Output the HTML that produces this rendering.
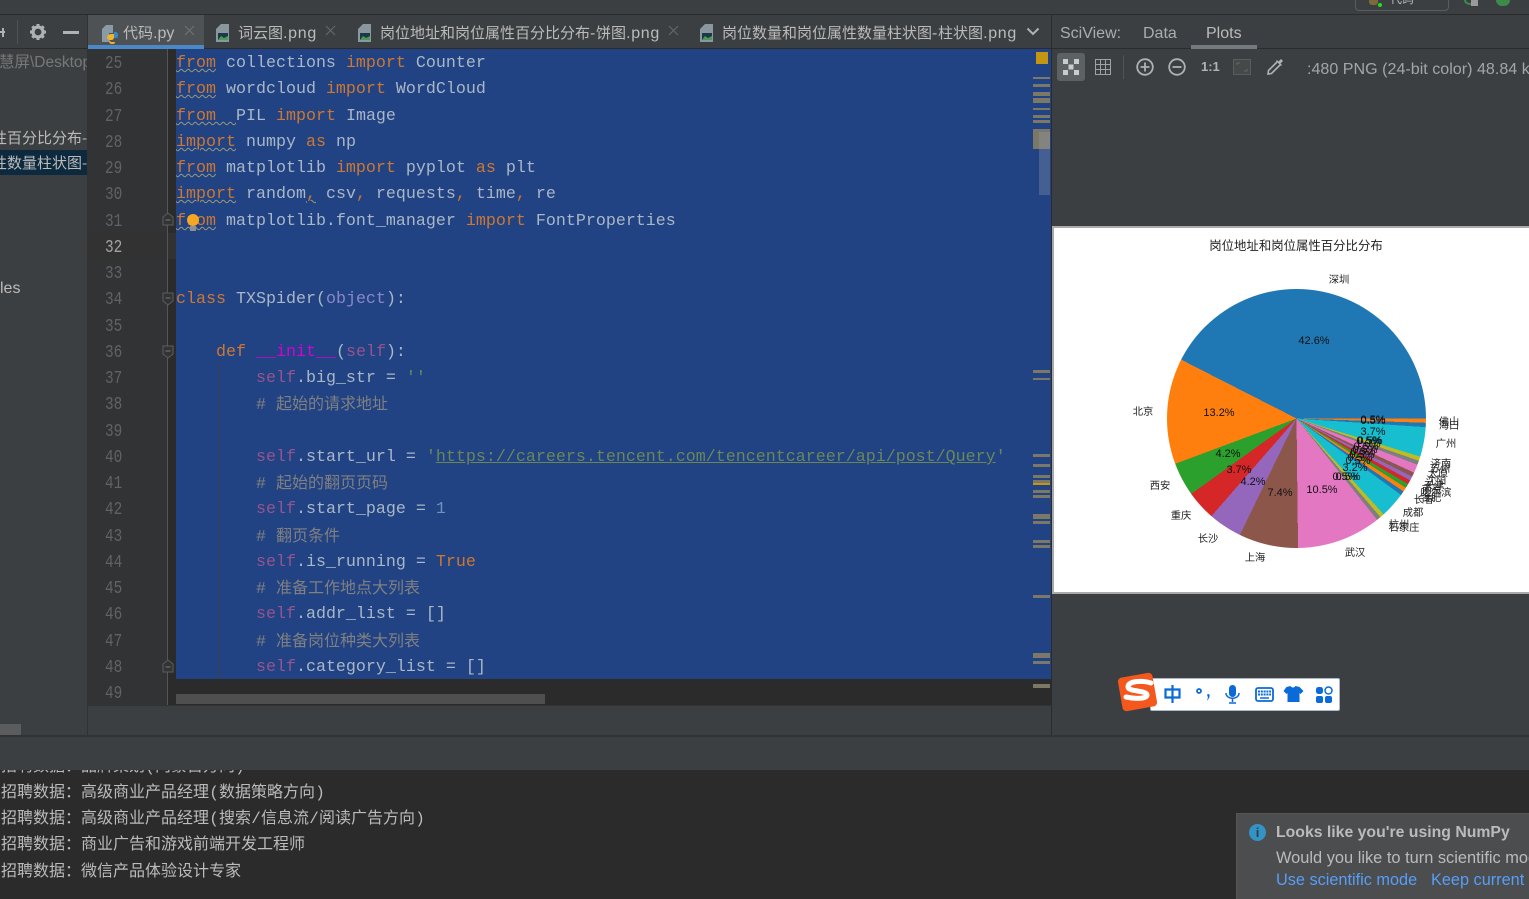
<!DOCTYPE html>
<html><head><meta charset="utf-8"><style>
html,body{margin:0;padding:0;background:#3c3f41}
#r{position:relative;width:1529px;height:899px;overflow:hidden;background:#3c3f41;font-family:"Liberation Sans","Noto Sans CJK SC",sans-serif}
#r div{position:absolute}
.l{left:176px;margin-top:2px;font:16.67px/26px "Liberation Mono","Noto Sans CJK SC",monospace;color:#a9b7c6;white-space:pre;height:26px}
.l b{font-weight:normal;font-size:16px}
.n{left:105px;margin-top:2px;font:18px/26px "Liberation Mono",monospace;color:#606366;transform:scaleX(.8);transform-origin:0 0}
.k{color:#cc7832}.s{color:#94558d}.t{color:#6a8759}.c{color:#808080}
.w{text-decoration:underline wavy #9a9a78 1px;text-underline-offset:1px}
.tab{top:16px;height:33px;font:15px/35px "Liberation Sans","Noto Sans CJK SC",sans-serif;color:#bbb;white-space:nowrap}
.tab i{font-style:normal;font-size:16px}
.sv{font-size:16px}
.m{left:1033px;width:17px;background:#7b7868}
.p{font:11px/12px "Liberation Sans","Noto Sans CJK SC",sans-serif;color:#111;transform:translate(-50%,-50%);white-space:nowrap;filter:blur(.25px)}
.z{font:10.3px/12px "Noto Sans CJK SC",sans-serif;color:#222;transform:translate(-50%,-50%);white-space:nowrap;filter:blur(.2px)}
.o{left:1px;font:16px/26px "WenQuanYi Zen Hei","Noto Sans CJK SC",sans-serif;color:#bbbbbb;white-space:nowrap}
.o b{font:16px/26px "Liberation Mono",monospace;display:inline-block;width:10px;text-align:center}
</style></head><body><div id="r">

<!-- top strip -->
<div style="left:0;top:14px;width:1529px;height:1px;background:#2b2b2b"></div>
<div style="left:1355px;top:-10px;width:92px;height:19px;border:1px solid #5a5d5f;border-radius:4px"></div>
<div style="left:1369px;top:0;width:9px;height:5px;background:#7a6a3c;border-radius:0 0 3px 3px"></div>
<div style="left:1378px;top:3px;width:4px;height:4px;background:#1fe01f;border-radius:50%"></div>
<div style="left:1390px;top:-8px;font:12px/14px 'Noto Sans CJK SC',sans-serif;color:#bbb">代码</div>
<div style="left:1464px;top:-5px;width:8px;height:8px;border:2px solid #3d8b4b;border-top:0;border-radius:50%"></div>
<div style="left:1471px;top:0;width:7px;height:6px;background:#9a9a9a"></div>
<div style="left:1496px;top:0;width:14px;height:6px;background:#3d8b4b;border-radius:0 0 6px 6px"></div>

<!-- left panel toolbar -->
<div style="left:0;top:31px;width:5px;height:2px;background:#afb1b3"></div>
<div style="left:2px;top:28px;width:2px;height:9px;background:#afb1b3"></div>
<div style="left:17px;top:20px;width:1px;height:24px;background:#505355"></div>
<svg style="position:absolute;left:29px;top:23px" width="18" height="18" viewBox="0 0 18 18"><circle cx="9" cy="9" r="5" fill="none" stroke="#afb1b3" stroke-width="3.2"/><g stroke="#afb1b3" stroke-width="3"><path d="M9 1v3M9 14v3M1 9h3M14 9h3M3.3 3.3l2.1 2.1M12.6 12.6l2.1 2.1M14.7 3.3l-2.1 2.1M5.4 12.6l-2.1 2.1"/></g></svg>
<div style="left:63px;top:31px;width:16px;height:3px;background:#afb1b3"></div>
<div style="left:0;top:48px;width:1529px;height:1px;background:#2b2b2b"></div>

<!-- left panel -->
<div style="left:0;top:50px;width:87px;height:24px;overflow:hidden;white-space:nowrap;font:15.5px/26px 'Liberation Sans','Noto Sans CJK SC',sans-serif;color:#787878"><span style="margin-left:-1px">慧屏\Desktop</span></div>
<div style="left:0;top:150px;width:87px;height:25px;background:#0d293e"></div>
<div style="left:0;top:126px;width:87px;height:24px;overflow:hidden;white-space:nowrap;font:15px/24px 'Noto Sans CJK SC',sans-serif;color:#bbb"><span style="margin-left:-8px">性百分比分布-</span></div>
<div style="left:0;top:151px;width:87px;height:24px;overflow:hidden;white-space:nowrap;font:15px/24px 'Noto Sans CJK SC',sans-serif;color:#bbb"><span style="margin-left:-8px">性数量柱状图-</span></div>
<div style="left:0;top:277px;font:16px/24px 'Liberation Sans',sans-serif;color:#bbb">les</div>
<div style="left:0;top:724px;width:21px;height:11px;background:#5a5c5e"></div>
<div style="left:87px;top:15px;width:1px;height:720px;background:#323232"></div>

<!-- tabs -->
<div style="left:88px;top:15px;width:116px;height:30px;background:#4e5254"></div>
<div style="left:88px;top:45px;width:116px;height:4px;background:#4a88c7"></div>
<svg style="position:absolute;left:101px;top:24px" width="18" height="20" viewBox="0 0 18 20"><path d="M1 5l4-4h7v8H8v9H1z" fill="#8a9aa6"/><path d="M9 10h4v-2c2 0 4 0 4 3s-1 3-3 3h-3v1H9z" fill="#3a86c8"/><path d="M6 14c0-3 2-4 4-4h3v3c0 2-1 3-3 3H8c0 2 0 4 3 4s3-1 3-2h-4" fill="#f0b429"/></svg>
<div class="tab" style="left:123px">代码<i>.py</i></div>
<svg style="position:absolute;left:184px;top:25px" width="12" height="12"><path d="M1 1l9 9M10 1l-9 9" stroke="#6c7072" stroke-width="1.2"/></svg>
<svg style="position:absolute;left:216px;top:24px" width="14" height="18" viewBox="0 0 14 18"><path d="M0 5l5-5h8v18H0z" fill="#8a979f"/><rect x="2" y="9" width="10" height="7" fill="#1c3a46"/><path d="M2 16l3-4 3 2 4-2v4z" fill="#4c9a5a"/></svg>
<div class="tab" style="left:238px">词云图<i style="letter-spacing:.7px">.png</i></div>
<svg style="position:absolute;left:325px;top:25px" width="12" height="12"><path d="M1 1l9 9M10 1l-9 9" stroke="#63676a" stroke-width="1.2"/></svg>
<svg style="position:absolute;left:358px;top:24px" width="14" height="18" viewBox="0 0 14 18"><path d="M0 5l5-5h8v18H0z" fill="#8a979f"/><rect x="2" y="9" width="10" height="7" fill="#1c3a46"/><path d="M2 16l3-4 3 2 4-2v4z" fill="#4c9a5a"/></svg>
<div class="tab" style="left:380px">岗位地址和岗位属性百分比分布<i style="letter-spacing:.7px">-</i>饼图<i style="letter-spacing:.7px">.png</i></div>
<svg style="position:absolute;left:668px;top:25px" width="12" height="12"><path d="M1 1l9 9M10 1l-9 9" stroke="#63676a" stroke-width="1.2"/></svg>
<svg style="position:absolute;left:700px;top:24px" width="14" height="18" viewBox="0 0 14 18"><path d="M0 5l5-5h8v18H0z" fill="#8a979f"/><rect x="2" y="9" width="10" height="7" fill="#1c3a46"/><path d="M2 16l3-4 3 2 4-2v4z" fill="#4c9a5a"/></svg>
<div class="tab" style="left:722px">岗位数量和岗位属性数量柱状图<i style="letter-spacing:.7px">-</i>柱状图<i style="letter-spacing:.7px">.png</i></div>
<svg style="position:absolute;left:1026px;top:27px" width="14" height="10"><path d="M1.5 1.5L7 7l5.5-5.5" fill="none" stroke="#afb1b3" stroke-width="2"/></svg>

<!-- gutter + editor -->
<div style="left:88px;top:49px;width:80px;height:656px;background:#313335"></div>
<div style="left:168px;top:49px;width:8px;height:656px;background:#2b2b2b"></div>
<div style="left:88px;top:233px;width:88px;height:26px;background:#323232"></div>
<div style="left:167px;top:49px;width:1px;height:656px;background:#555"></div>
<div style="left:176px;top:49px;width:875px;height:630px;background:#214283"></div>
<div style="left:176px;top:679px;width:875px;height:26px;background:#2b2b2b"></div>
<div style="left:176px;top:694px;width:369px;height:10px;background:#4f4f4f"></div>
<div style="left:88px;top:705px;width:963px;height:1px;background:#333"></div>
<div style="left:219px;top:364px;width:1px;height:315px;background:#3d3f48"></div>

<div class="n" style="top:49px">25</div><div class="n" style="top:75px">26</div><div class="n" style="top:102px">27</div><div class="n" style="top:128px">28</div><div class="n" style="top:154px">29</div><div class="n" style="top:180px">30</div><div class="n" style="top:207px">31</div><div class="n" style="top:233px;color:#a4a3a3">32</div><div class="n" style="top:259px">33</div><div class="n" style="top:285px">34</div><div class="n" style="top:312px">35</div><div class="n" style="top:338px">36</div><div class="n" style="top:364px">37</div><div class="n" style="top:390px">38</div><div class="n" style="top:417px">39</div><div class="n" style="top:443px">40</div><div class="n" style="top:469px">41</div><div class="n" style="top:495px">42</div><div class="n" style="top:522px">43</div><div class="n" style="top:548px">44</div><div class="n" style="top:574px">45</div><div class="n" style="top:600px">46</div><div class="n" style="top:627px">47</div><div class="n" style="top:653px">48</div><div class="n" style="top:679px">49</div>

<div class="l" style="top:49px"><span class="k w">from</span> collections <span class="k">import</span> Counter</div>
<div class="l" style="top:75px"><span class="k w">from</span> wordcloud <span class="k">import</span> WordCloud</div>
<div class="l" style="top:102px"><span class="k w">from  </span>PIL <span class="k">import</span> Image</div>
<div class="l" style="top:128px"><span class="k w">import</span> numpy <span class="k">as</span> np</div>
<div class="l" style="top:154px"><span class="k w">from</span> matplotlib <span class="k">import</span> pyplot <span class="k">as</span> plt</div>
<div class="l" style="top:180px"><span class="k w">import</span> random<span class="k w">,</span> csv<span class="k">,</span> requests<span class="k">,</span> time<span class="k">,</span> re</div>
<div class="l" style="top:207px"><span class="k w">from</span> matplotlib.font_manager <span class="k">import</span> FontProperties</div>
<div class="l" style="top:285px"><span class="k">class</span> TXSpider(<span style="color:#8888c6">object</span>):</div>
<div class="l" style="top:338px">    <span class="k">def</span> <span style="color:#d400d4">__init__</span>(<span class="s">self</span>):</div>
<div class="l" style="top:364px">        <span class="s">self</span>.big_str = <span class="t">''</span></div>
<div class="l" style="top:390px">        <span class="c"># <b>起始的请求地址</b></span></div>
<div class="l" style="top:443px">        <span class="s">self</span>.start_url = <span class="t">'<u>https://careers.tencent.com/tencentcareer/api/post/Query</u>'</span></div>
<div class="l" style="top:469px">        <span class="c"># <b>起始的翻页页码</b></span></div>
<div class="l" style="top:495px">        <span class="s">self</span>.start_page = <span style="color:#6897bb">1</span></div>
<div class="l" style="top:522px">        <span class="c"># <b>翻页条件</b></span></div>
<div class="l" style="top:548px">        <span class="s">self</span>.is_running = <span class="k">True</span></div>
<div class="l" style="top:574px">        <span class="c"># <b>准备工作地点大列表</b></span></div>
<div class="l" style="top:600px">        <span class="s">self</span>.addr_list = []</div>
<div class="l" style="top:627px">        <span class="c"># <b>准备岗位种类大列表</b></span></div>
<div class="l" style="top:653px">        <span class="s">self</span>.category_list = []</div>

<!-- fold markers -->
<svg style="position:absolute;left:162px;top:212px" width="13" height="14"><path d="M1 5l5-4 5 4v8H1z" fill="#313335" stroke="#5a5d5f"/><path d="M3.5 8h5" stroke="#777"/></svg>
<svg style="position:absolute;left:162px;top:292px" width="13" height="14"><path d="M1 1h10v8l-5 4-5-4z" fill="#313335" stroke="#5a5d5f"/><path d="M3.5 6h5" stroke="#777"/></svg>
<svg style="position:absolute;left:162px;top:345px" width="13" height="14"><path d="M1 1h10v8l-5 4-5-4z" fill="#313335" stroke="#5a5d5f"/><path d="M3.5 6h5" stroke="#777"/></svg>
<svg style="position:absolute;left:162px;top:659px" width="13" height="14"><path d="M1 5l5-4 5 4v8H1z" fill="#313335" stroke="#5a5d5f"/><path d="M3.5 8h5" stroke="#777"/></svg>

<!-- bulb -->
<div style="left:187px;top:214px;width:12px;height:12px;background:#f5a623;border-radius:50%"></div>
<div style="left:190px;top:226px;width:6px;height:5px;background:#8d8f96"></div>

<!-- minimap marks -->
<div style="left:1036px;top:52px;width:12px;height:12px;background:#c49513"></div>
<div class="m" style="top:77px;height:2px"></div><div class="m" style="top:84px;height:3px"></div><div class="m" style="top:92px;height:4px"></div><div class="m" style="top:98px;height:5px"></div><div class="m" style="top:108px;height:2px"></div><div class="m" style="top:115px;height:3px"></div><div class="m" style="top:120px;height:3px"></div><div class="m" style="top:129px;height:20px"></div>
<div style="left:1039px;top:132px;width:11px;height:63px;background:rgba(150,160,180,.32)"></div>
<div class="m" style="top:370px;height:3px"></div><div class="m" style="top:378px;height:2px"></div><div class="m" style="top:454px;height:3px"></div><div class="m" style="top:464px;height:3px"></div><div class="m" style="top:475px;height:3px"></div><div class="m" style="top:480px;height:3px"></div><div class="m" style="top:483px;height:2px;background:#c49513"></div><div class="m" style="top:490px;height:3px"></div><div class="m" style="top:495px;height:3px"></div><div class="m" style="top:514px;height:5px"></div><div class="m" style="top:521px;height:3px"></div><div class="m" style="top:540px;height:3px"></div><div class="m" style="top:545px;height:3px"></div><div class="m" style="top:595px;height:3px"></div><div class="m" style="top:653px;height:5px"></div><div class="m" style="top:661px;height:3px"></div><div class="m" style="top:684px;height:4px"></div>

<!-- SciView -->
<div style="left:1051px;top:15px;width:1px;height:720px;background:#2b2b2b"></div>
<div class="tab sv" style="left:1060px;color:#a9adb0">SciView:</div>
<div class="tab sv" style="left:1143px;color:#a9adb0">Data</div>
<div class="tab sv" style="left:1206px">Plots</div>
<div style="left:1191px;top:45px;width:66px;height:4px;background:#747a80"></div>

<div style="left:1057px;top:53px;width:28px;height:28px;background:#5c6164;border-radius:3px"></div>
<svg style="position:absolute;left:1063px;top:59px" width="16" height="16"><path d="M0 0h5v5H0zM11 0h5v5h-5zM5.500 5.500h5v5h-5zM0 11h5v5H0zM11 11h5v5h-5z" fill="#c9cccd"/></svg>
<svg style="position:absolute;left:1095px;top:59px" width="16" height="16"><path d="M.5.5h15v15H.5zM5.500.5v15M10.500.5v15M.5 5.500h15M.5 10.500h15" fill="none" stroke="#9fa2a4"/></svg>
<div style="left:1123px;top:55px;width:1px;height:24px;background:#505355"></div>
<svg style="position:absolute;left:1136px;top:58px" width="18" height="18"><circle cx="9" cy="9" r="7.800" fill="none" stroke="#afb1b3" stroke-width="1.800"/><path d="M4.500 9h9M9 4.500v9" stroke="#afb1b3" stroke-width="1.800"/></svg>
<svg style="position:absolute;left:1168px;top:58px" width="18" height="18"><circle cx="9" cy="9" r="7.800" fill="none" stroke="#afb1b3" stroke-width="1.800"/><path d="M4.500 9h9" stroke="#afb1b3" stroke-width="1.800"/></svg>
<div style="left:1201px;top:60px;font:bold 13px/14px 'Liberation Sans',sans-serif;color:#afb1b3">1:1</div>
<svg style="position:absolute;left:1233px;top:59px" width="18" height="16"><path d="M.5.500h17v15H.500z" fill="#45494a" stroke="#5a5d5f"/><path d="M4 6V4h3M14 10v2h-3" fill="none" stroke="#636668"/></svg>
<svg style="position:absolute;left:1266px;top:58px" width="18" height="18" viewBox="0 0 18 18"><path d="M11 4L2.500 12.500 2 16l3.500-.5L14 7" fill="none" stroke="#afb1b3" stroke-width="1.600"/><path d="M10 3l5 5 1-1-1.500-1.500L17 3l-2-2-2.500 2.500L11 2z" fill="#afb1b3"/></svg>
<div style="left:1308px;top:57px;width:221px;height:24px;overflow:hidden;white-space:nowrap;font:16.1px/24px 'Liberation Sans',sans-serif;color:#a3a6a8"><span style="margin-left:-1px">:480 PNG (24-bit color) 48.84 kB</span></div>

<!-- plot image -->
<div style="left:1052px;top:226px;width:477px;height:368px;background:#fff;box-sizing:border-box;border-left:2px solid #aaa;border-top:2px solid #aaa;border-bottom:2px solid #aaa"></div>
<div style="left:1296px;top:245px;font:12.4px/16px 'Noto Sans CJK SC',sans-serif;color:#222;transform:translate(-50%,-50%);white-space:nowrap">岗位地址和岗位属性百分比分布</div>
<div style="left:1166.5px;top:288.5px;width:259px;height:259px;border-radius:50%;background:conic-gradient(from 90deg,#ff7f0e 0 .53%,#1f77b4 .53% 1.06%,#17becf 1.06% 4.76%,#bcbd22 4.76% 5.29%,#7f7f7f 5.29% 5.82%,#e377c2 5.82% 6.87%,#8c564b 6.87% 7.4%,#9467bd 7.4% 7.93%,#d62728 7.93% 8.46%,#2ca02c 8.46% 8.99%,#ff7f0e 8.99% 9.52%,#1f77b4 9.52% 10.05%,#17becf 10.05% 13.25%,#bcbd22 13.25% 13.78%,#7f7f7f 13.78% 14.31%,#e377c2 14.31% 24.81%,#8c564b 24.81% 32.21%,#9467bd 32.21% 36.41%,#d62728 36.41% 40.11%,#2ca02c 40.11% 44.31%,#ff7f0e 44.31% 57.51%,#1f77b4 57.51% 100%)"></div>

<div class="p" style="left:1314px;top:341px">42.6%</div><div class="p" style="left:1219px;top:413px">13.2%</div><div class="p" style="left:1228px;top:454px">4.2%</div><div class="p" style="left:1239px;top:470px">3.7%</div><div class="p" style="left:1253px;top:482px">4.2%</div><div class="p" style="left:1280px;top:493px">7.4%</div><div class="p" style="left:1322px;top:490px">10.5%</div><div class="p" style="left:1345px;top:477px">0.5%</div><div class="p" style="left:1348px;top:477px">0.5%</div><div class="p" style="left:1355px;top:468px">3.2%</div><div class="p" style="left:1358px;top:461px">0.5%</div><div class="p" style="left:1360px;top:458px">0.5%</div><div class="p" style="left:1362px;top:455px">0.5%</div><div class="p" style="left:1363px;top:452px">0.5%</div><div class="p" style="left:1365px;top:450px">0.5%</div><div class="p" style="left:1366px;top:447px">0.5%</div><div class="p" style="left:1368px;top:444px">1.0%</div><div class="p" style="left:1369px;top:441px">0.5%</div><div class="p" style="left:1370px;top:441px">0.5%</div><div class="p" style="left:1373px;top:432px">3.7%</div><div class="p" style="left:1373px;top:420px">0.5%</div><div class="p" style="left:1373px;top:421px">0.5%</div>

<div class="z" style="left:1339px;top:279px">深圳</div><div class="z" style="left:1143px;top:411px">北京</div><div class="z" style="left:1160px;top:485px">西安</div><div class="z" style="left:1181px;top:515px">重庆</div><div class="z" style="left:1208px;top:538px">长沙</div><div class="z" style="left:1255px;top:557px">上海</div><div class="z" style="left:1355px;top:552px">武汉</div><div class="z" style="left:1404px;top:527px">石家庄</div><div class="z" style="left:1399px;top:524px">杭州</div><div class="z" style="left:1413px;top:512px">成都</div><div class="z" style="left:1424px;top:499px">长春</div><div class="z" style="left:1431px;top:497px">合肥</div><div class="z" style="left:1436px;top:492px">哈尔滨</div><div class="z" style="left:1432px;top:489px">南京</div><div class="z" style="left:1434px;top:485px">天津</div><div class="z" style="left:1436px;top:480px">沈阳</div><div class="z" style="left:1438px;top:473px">太原</div><div class="z" style="left:1440px;top:468px">苏州</div><div class="z" style="left:1441px;top:463px">济南</div><div class="z" style="left:1446px;top:443px">广州</div><div class="z" style="left:1449px;top:425px">海口</div><div class="z" style="left:1449px;top:421px">佛山</div>

<!-- Sogou IME -->
<div style="left:1150px;top:678px;width:190px;height:33px;background:#fff;border:1px solid #a9b8cc;border-radius:2px;box-sizing:border-box"></div>
<div style="left:1120px;top:675px;width:35px;height:34px;background:#f4581c;border-radius:4px;transform:rotate(-10deg)"></div>
<svg style="position:absolute;left:1120px;top:675px" width="36" height="34" viewBox="0 0 36 34"><path d="M31 8C22 5 8 6 8 12c0 5 19 3 19 8 0 4-12 4-21 2" fill="none" stroke="#fff" stroke-width="5" stroke-linecap="round"/></svg>
<svg style="position:absolute;left:1164px;top:684px" width="172" height="22" viewBox="0 0 172 22" fill="#0a6ad8">
<path d="M1.500 5.500h14v8h-14zM8.500 1v18" fill="none" stroke="#0a6ad8" stroke-width="2.200"/>
<circle cx="35" cy="7" r="2" fill="none" stroke="#0a6ad8" stroke-width="1.800"/><path d="M44 10c2 0 2 2 1 4l-2 3 1-4c-1-1-1-3 0-3z"/>
<rect x="65" y="1" width="7" height="12" rx="3.500"/><path d="M62 9c0 7 13 7 13 0M68.500 15v3M65 19h7" fill="none" stroke="#0a6ad8" stroke-width="1.500"/>
<rect x="92" y="4" width="17" height="13" rx="2" fill="none" stroke="#0a6ad8" stroke-width="1.800"/><path d="M94 7.500h13M94 10.500h13" stroke="#0a6ad8" stroke-width="2" stroke-dasharray="2 .8"/><path d="M96 14h9" stroke="#0a6ad8" stroke-width="1.500"/>
<path d="M121 3l4-1c1 2 4 2 5 0l4 1 4 4-3 3-1-1v9h-12V9l-1 1-3-3z" transform="translate(1.500 0)"/>
<rect x="152" y="3" width="7" height="7" rx="2.500"/><rect x="161" y="3" width="7" height="7" rx="3.500" fill="none" stroke="#0a6ad8" stroke-width="1.500"/><rect x="152" y="12" width="7" height="7" rx="2"/><rect x="161" y="12" width="7" height="7" rx="2"/>
</svg>

<!-- bottom -->
<div style="left:0;top:735px;width:1529px;height:2px;background:#323232"></div>
<div style="left:0;top:770px;width:1529px;height:129px;background:#2b2b2b;overflow:hidden">
<div class="o" style="top:-19px">招聘数据：品牌策划<b>(</b>内蒙古方向<b>)</b></div>
<div class="o" style="top:7px">招聘数据：高级商业产品经理<b>(</b>数据策略方向<b>)</b></div>
<div class="o" style="top:33px">招聘数据：高级商业产品经理<b>(</b>搜索<b>/</b>信息流<b>/</b>阅读广告方向<b>)</b></div>
<div class="o" style="top:59px">招聘数据：商业广告和游戏前端开发工程师</div>
<div class="o" style="top:86px">招聘数据：微信产品体验设计专家</div>
</div>

<!-- notification -->
<div style="left:1236px;top:813px;width:293px;height:86px;background:#4b4d4f;border-left:1px solid #555;border-top:1px solid #555;box-sizing:border-box"></div>
<div style="left:1249px;top:824px;width:17px;height:17px;border-radius:50%;background:#3592c4;color:#2b3e4a;font:bold 13px/17px 'Liberation Sans',sans-serif;text-align:center">i</div>
<div style="left:1276px;top:823px;font:bold 15.8px/20px 'Liberation Sans',sans-serif;color:#bbb;white-space:nowrap">Looks like you're using NumPy</div>
<div style="left:1276px;top:848px;width:253px;overflow:hidden;font:16.4px/20px 'Liberation Sans',sans-serif;color:#bbb;white-space:nowrap">Would you like to turn scientific mode on?</div>
<div style="left:1276px;top:870px;font:16.3px/20px 'Liberation Sans',sans-serif;color:#589df6;white-space:nowrap">Use scientific mode</div>
<div style="left:1431px;top:870px;width:98px;overflow:hidden;font:16.3px/20px 'Liberation Sans',sans-serif;color:#589df6;white-space:nowrap">Keep current</div>

</div></body></html>
